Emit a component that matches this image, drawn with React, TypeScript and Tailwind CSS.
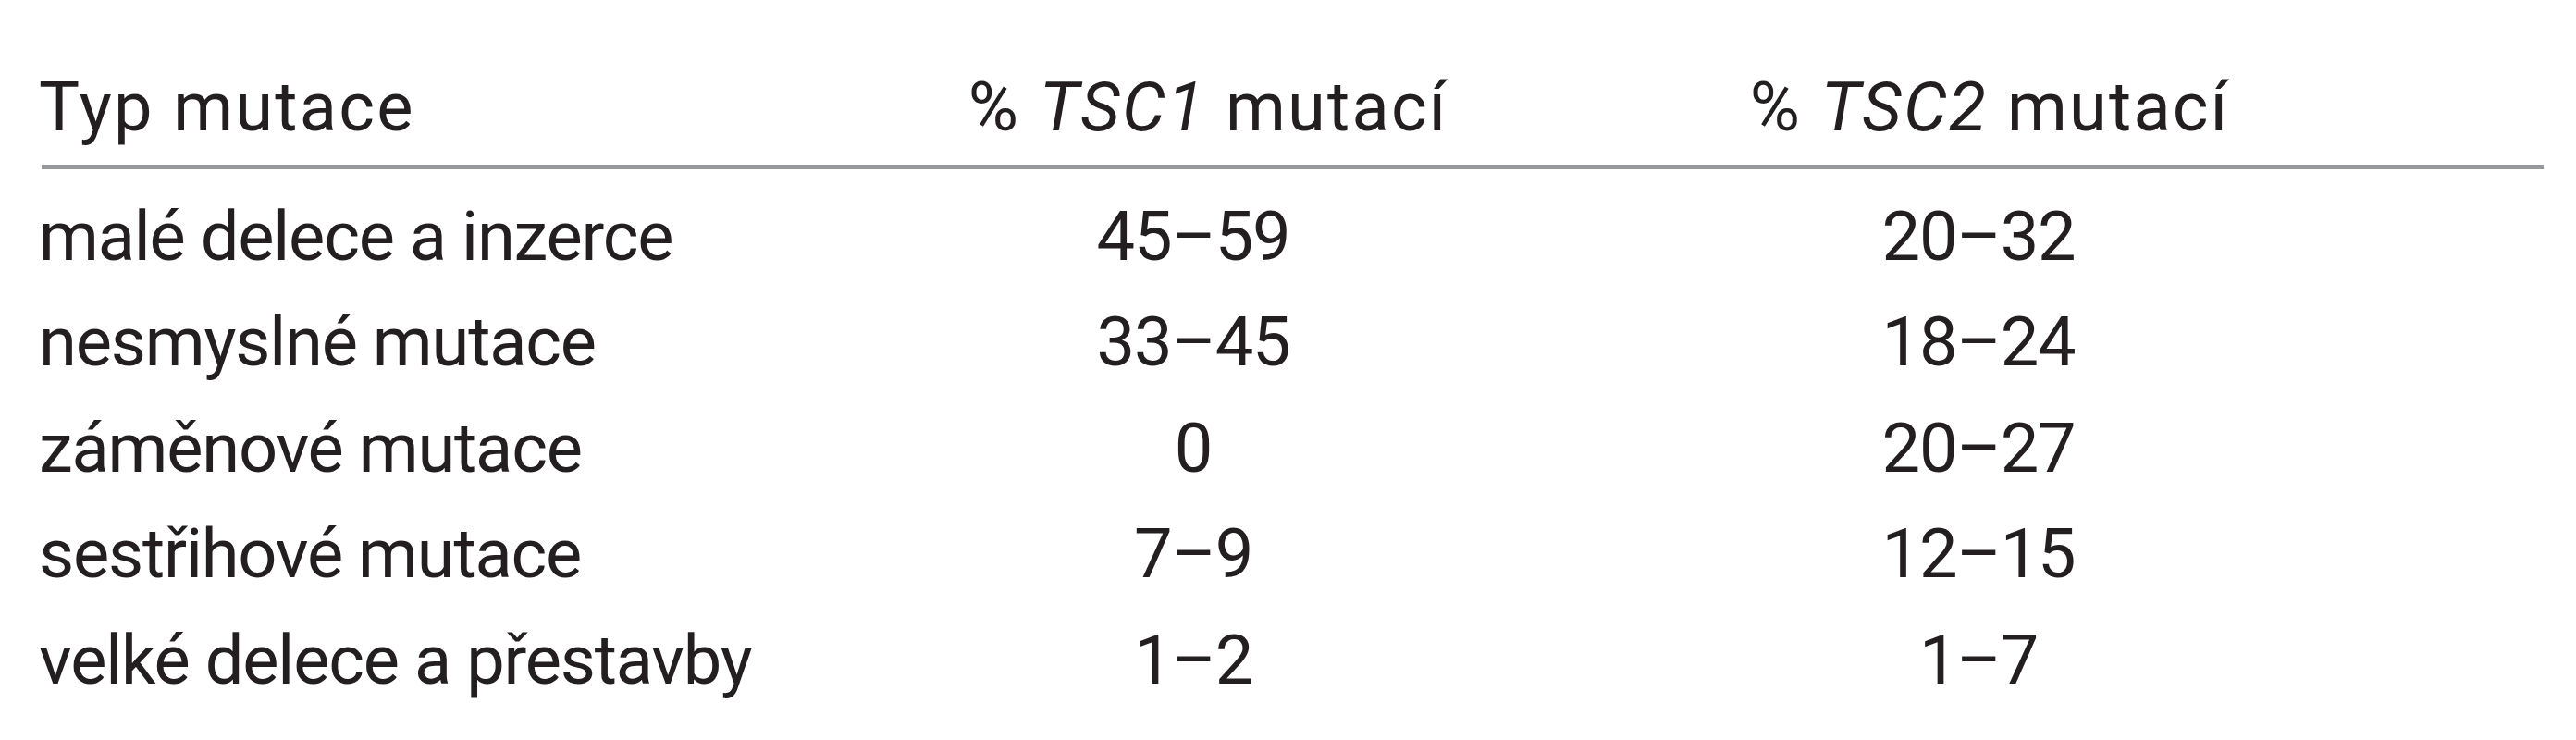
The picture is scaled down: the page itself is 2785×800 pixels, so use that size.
import React from "react";

const rows: [string, string, string][] = [
  ["malé delece a inzerce", "45–59", "20–32"],
  ["nesmyslné mutace", "33–45", "18–24"],
  ["záměnové mutace", "0", "20–27"],
  ["sestřihové mutace", "7–9", "12–15"],
  ["velké delece a přestavby", "1–2", "1–7"],
];

export default function App() {
  return (
    <div
      className="w-[2785px] h-[800px] bg-white text-[#231f20] overflow-hidden"
      style={{ fontFamily: "Roboto, 'Noto Sans', sans-serif" }}
    >
      <div className="pt-[59px] pl-[42px]">
        <div className="grid grid-cols-[998px_500px_1198px] text-[74px] leading-[114.5px] tracking-[2.2px]">
          <div className="whitespace-nowrap">Typ mutace</div>
          <div className="flex justify-center pl-[32px] whitespace-nowrap">
            <span>
              % <i>TSC1</i> mutací
            </span>
          </div>
          <div className="flex justify-center pl-[24px] whitespace-nowrap">
            <span>
              % <i>TSC2</i> mutací
            </span>
          </div>
        </div>
        <div className="mt-[4px] ml-[3px] w-[2705px] h-[5px] bg-[#97989b]" />
        <div className="mt-[16px] grid grid-cols-[998px_500px_1198px] text-[74px] leading-[114.5px] tracking-[-1.2px]">
          {rows.map(([a, b, c]) => (
            <React.Fragment key={a}>
              <div className="whitespace-nowrap">{a}</div>
              <div className="text-center">{b}</div>
              <div className="text-center">{c}</div>
            </React.Fragment>
          ))}
        </div>
      </div>
    </div>
  );
}
